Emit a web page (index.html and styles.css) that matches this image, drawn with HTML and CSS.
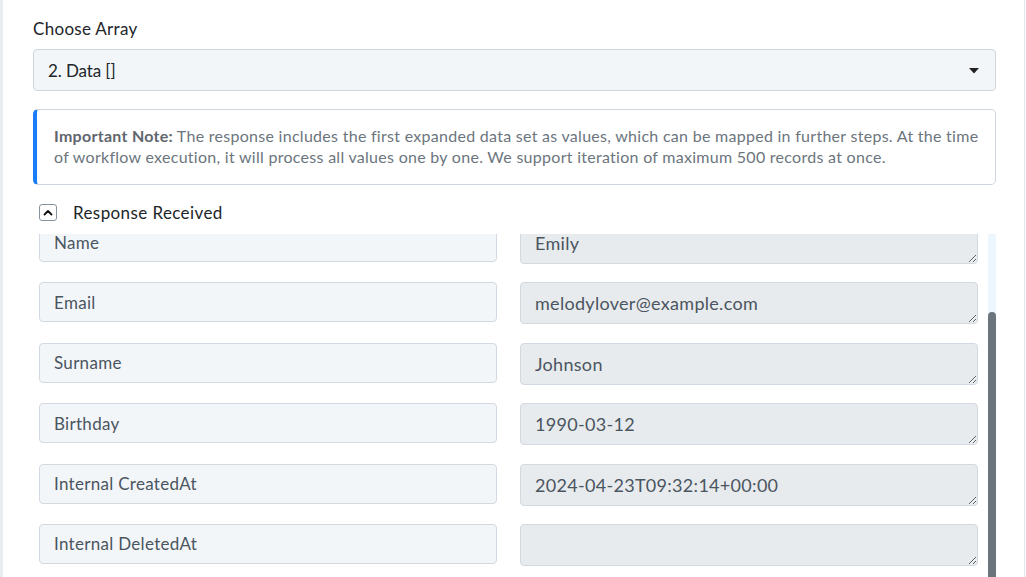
FILE: index.html
```html
<!DOCTYPE html>
<html lang="en">
<head>
<meta charset="utf-8">
<title>Choose Array</title>
<link rel="stylesheet" href="styles.css">
</head>
<body>
<div class="page">
  <div class="content">
    <label class="field-label">Choose Array</label>
    <div class="select">
      <span>2. Data []</span>
      <svg class="caret" width="10" height="6" viewBox="0 0 10 6"><path d="M0 0 H10 L5 5.5 Z" fill="#222"/></svg>
    </div>
    <div class="note">
      <b>Important Note:</b> The response includes the first expanded data set as values, which can be mapped in further steps. At the time of workflow execution, it will process all values one by one. We support iteration of maximum 500 records at once.
    </div>
    <div class="resp-head">
      <span class="toggle"><svg width="10" height="7" viewBox="0 0 10 7"><path d="M1.5 5.5 L5 2 L8.5 5.5" fill="none" stroke="#111" stroke-width="1.8" stroke-linecap="round" stroke-linejoin="round"/></svg></span>
      <span class="resp-title">Response Received</span>
    </div>
    <div class="scroll">
      <div class="list">
        <div class="rows">
          <div class="row"><div class="key">Name</div><textarea class="val" rows="1" readonly>Emily</textarea></div>
          <div class="row"><div class="key">Email</div><textarea class="val" rows="1" readonly>melodylover@example.com</textarea></div>
          <div class="row"><div class="key">Surname</div><textarea class="val" rows="1" readonly>Johnson</textarea></div>
          <div class="row"><div class="key">Birthday</div><textarea class="val" rows="1" readonly>1990-03-12</textarea></div>
          <div class="row"><div class="key">Internal CreatedAt</div><textarea class="val" rows="1" readonly>2024-04-23T09:32:14+00:00</textarea></div>
          <div class="row"><div class="key">Internal DeletedAt</div><textarea class="val" rows="1" readonly></textarea></div>
          <div class="row"><div class="key">Internal UpdatedAt</div><textarea class="val" rows="1" readonly></textarea></div>
        </div>
      </div>
      <div class="sbar"><div class="thumb"></div></div>
    </div>
  </div>
</div>
</body>
</html>
```
FILE: styles.css
```css
html, body {
  margin: 0;
  padding: 0;
  height: 577px;
  overflow: hidden;
  background: #fff;
}
body {
  font-family: Lato, "Open Sans", sans-serif;
  color: #212529;
}
.page {
  width: 1025px;
  height: 577px;
  box-sizing: border-box;
  border-left: 3px solid #e9edf2;
  border-right: 1px solid #e3e7eb;
  padding: 17px 28px 0 30px;
}
.content {
  display: flex;
  flex-direction: column;
}
.field-label {
  display: block;
  font-size: 17px;
  letter-spacing: 0.3px;
  line-height: 24px;
  color: #212529;
}
.select {
  margin-top: 8px;
  height: 42px;
  box-sizing: border-box;
  border: 1px solid #cfd6de;
  border-radius: 4px;
  background: #f3f6f9;
  display: flex;
  align-items: center;
  justify-content: space-between;
  padding: 0 16px 0 14px;
  font-size: 17px;
  letter-spacing: -0.1px;
  color: #212529;
}
.caret { margin-top: 1px; }
.note {
  margin-top: 18px;
  border: 1px solid #cfd6de;
  border-left: 4px solid #1a7cf7;
  border-radius: 5px;
  padding: 15px 14px 17px 17px;
  font-size: 16px;
  letter-spacing: 0.28px;
  line-height: 21px;
  color: #6c757d;
}
.note b { color: #5f666d; font-weight: 700; }
.resp-head {
  margin-top: 16px;
  display: flex;
  align-items: center;
  padding-left: 6px;
  height: 22px;
}
.toggle {
  width: 16px;
  height: 15px;
  border: 1px solid #8795a3;
  border-radius: 3px;
  display: flex;
  align-items: center;
  justify-content: center;
}
.resp-title {
  margin-left: 16px;
  font-size: 17px;
  letter-spacing: 0.4px;
  color: #212529;
}
.scroll {
  margin-top: 11px;
  height: 360px;
  display: flex;
}
.list {
  flex: 1;
  overflow: hidden;
  padding: 0 10px 0 6px;
}
.rows {
  margin-top: -12px;
  display: flex;
  flex-direction: column;
  gap: 18.4px;
}
.row {
  display: grid;
  grid-template-columns: 1fr 1fr;
  column-gap: 23px;
  align-items: start;
}
.key {
  height: 40px;
  box-sizing: border-box;
  border: 1px solid #d3d9e0;
  border-radius: 4px;
  background: #f3f6f9;
  padding: 0 14px;
  display: flex;
  align-items: center;
  font-size: 17px;
  letter-spacing: 0.3px;
  color: #4a5560;
}
.val {
  display: block;
  width: 100%;
  box-sizing: border-box;
  height: 42px;
  margin: 0;
  border: 1px solid #d3d9e0;
  border-radius: 4px;
  background: #e8ebee;
  padding: 8px 14px;
  font-family: Lato, "Open Sans", sans-serif;
  font-size: 18px;
  letter-spacing: 0.3px;
  line-height: 24px;
  color: #4a5560;
  resize: vertical;
  overflow: hidden;
  outline: none;
}
.sbar {
  width: 8px;
  background: #edf5ff;
  display: flex;
  flex-direction: column;
}
.thumb {
  margin-top: 78px;
  flex: 1;
  background: #6c757d;
  border-radius: 4px 4px 0 0;
}
```
